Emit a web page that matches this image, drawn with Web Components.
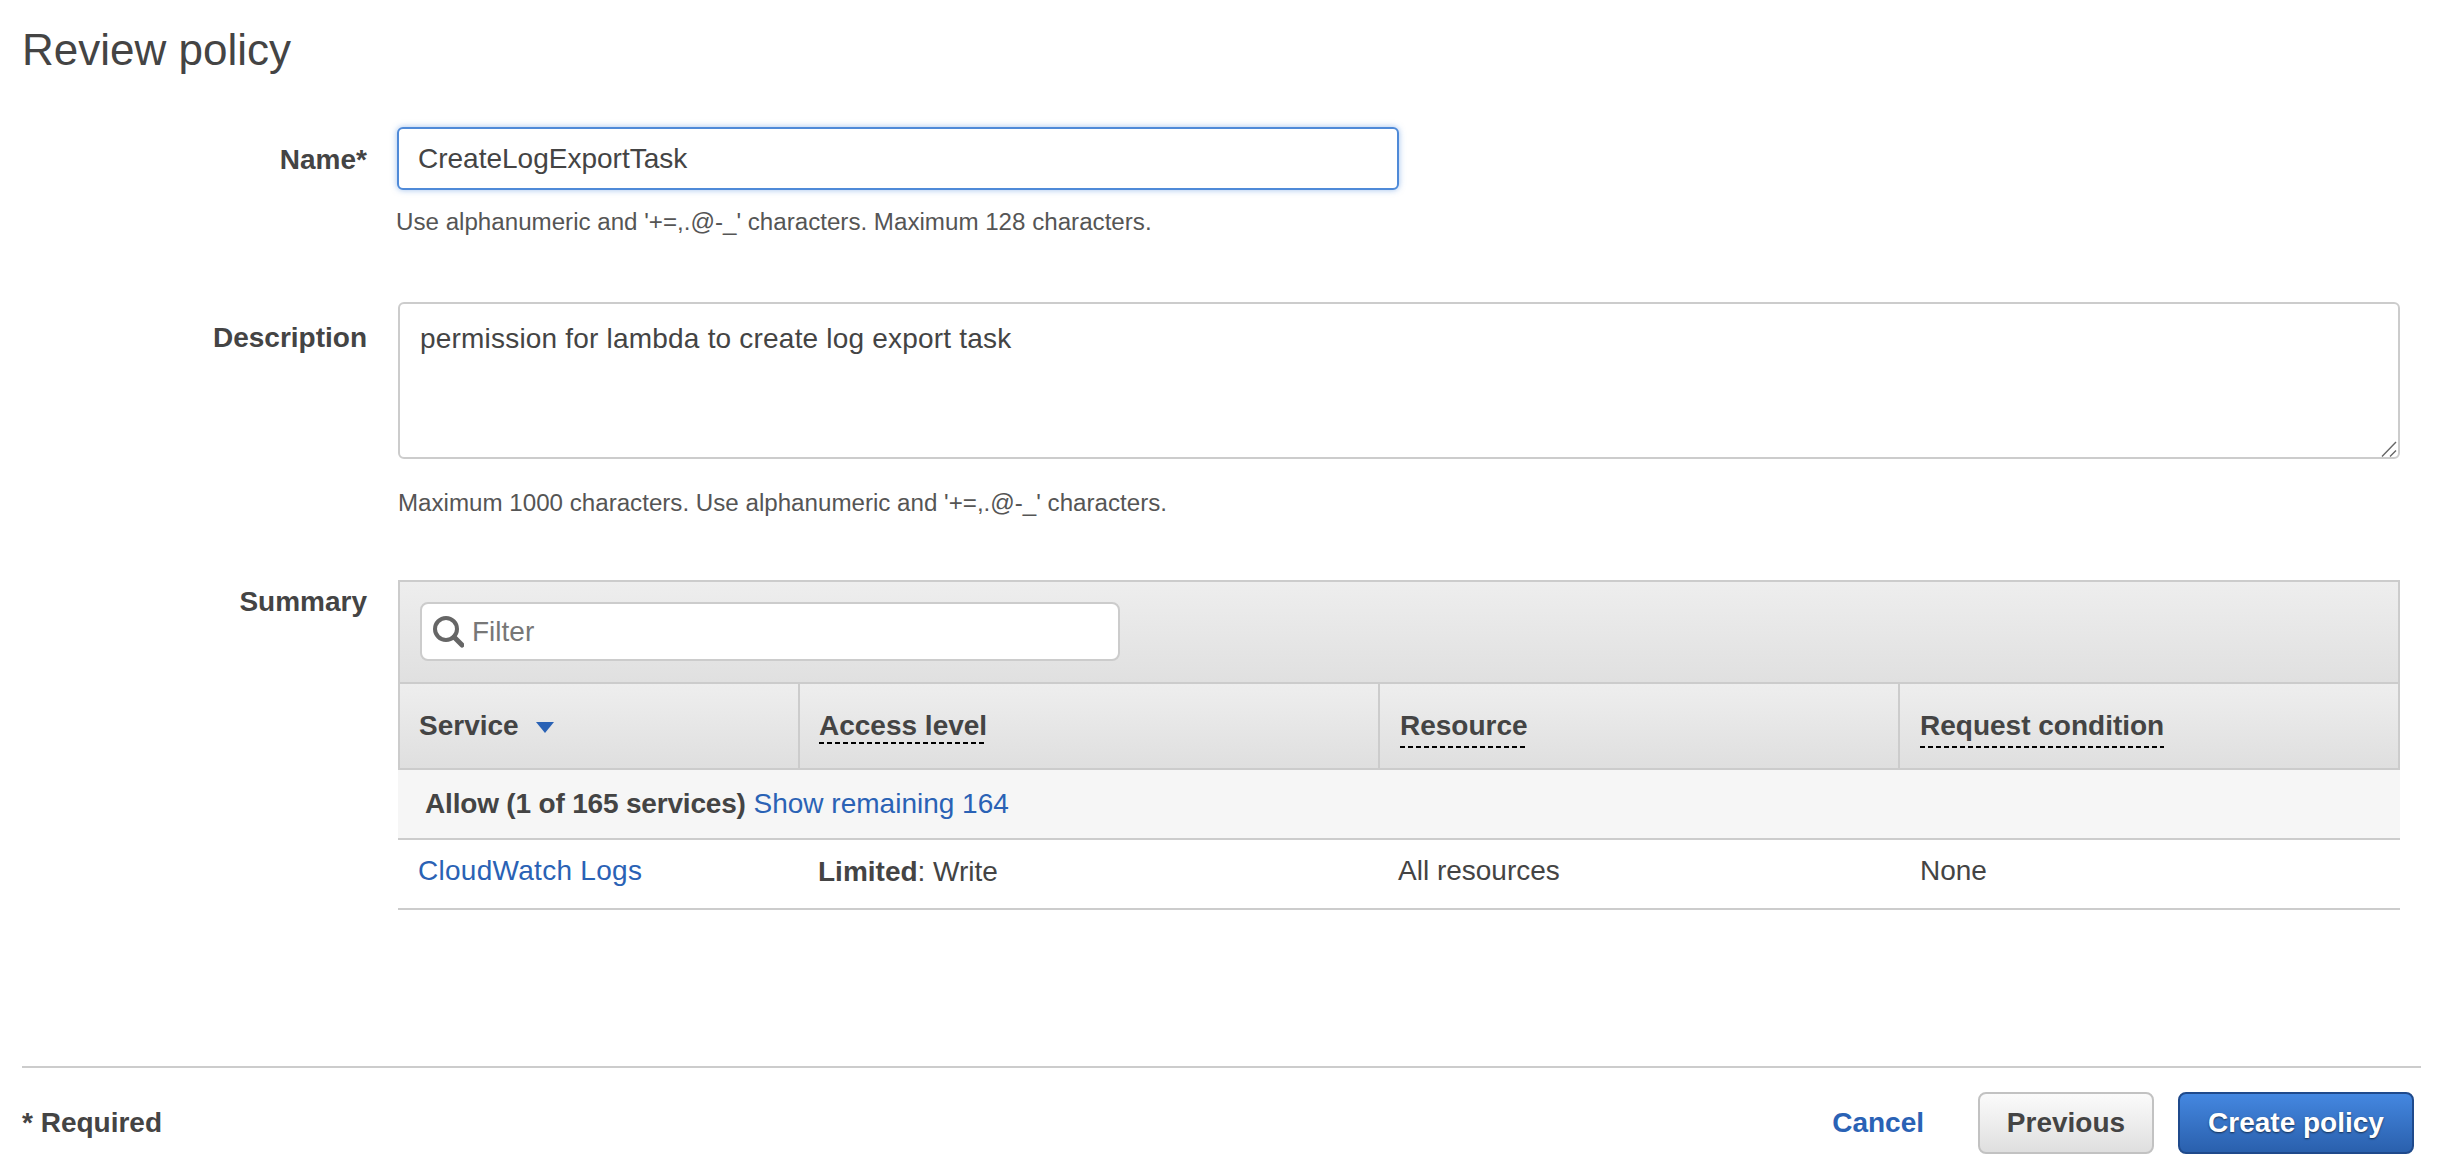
<!DOCTYPE html>
<html><head><meta charset="utf-8"><style>
html,body{margin:0;background:#fff}
body{font:28px/40px "Liberation Sans",Arial,sans-serif;color:#444}
</style></head><body>
<review-page></review-page>
<template id="t-page"><style>
:host{display:block;height:1172px;box-sizing:border-box;padding:0 19px 0 22px;overflow:hidden}
h1{margin:0;padding-top:22px;font-size:44px;line-height:56px;font-weight:400;color:#444}
.rows{margin-top:49px;display:flex;flex-direction:column}
</style>
<h1>Review policy</h1>
<div class="rows">
<form-row label="Name*" lt="13" hg="12" hx="-1" style="margin-bottom:60px" hint="Use alphanumeric and '+=,.@-_' characters. Maximum 128 characters."><text-box focused>CreateLogExportTask</text-box></form-row>
<form-row label="Description" lt="16" shift="1" hint="Maximum 1000 characters. Use alphanumeric and '+=,.@-_' characters." hg="24" style="margin-bottom:57px"><text-box multiline>permission for lambda to create log export task</text-box></form-row>
<form-row label="Summary" lt="2" shift="1"><policy-table></policy-table></form-row>
</div>
<page-footer></page-footer>
</template>
<template id="t-row"><style>
:host{display:grid;grid-template-columns:345px 1fr;column-gap:30px}
.l{font-weight:700;text-align:right;padding-top:var(--lt,11px)}
.f{min-width:0;margin-left:var(--sh,0)}
.h{font-size:24.15px;line-height:40px;color:#555;margin-top:var(--hg,11px);margin-left:var(--hx,0)}
.h:empty{display:none}
</style><div class="l"></div><div class="f"><slot></slot><div class="h"></div></div></template>
<template id="t-box"><style>
:host{display:block;box-sizing:border-box;width:2002px;background:#fff;border:2px solid #ccc;border-radius:6px;padding:15px 24px 11px 20px;height:157px;position:relative;letter-spacing:.2px}
:host([focused]){height:63px;width:1002px;border-color:#4f8ad8;box-shadow:0 0 6px rgba(80,140,220,.55);padding:10px 24px 9px 19px;letter-spacing:0}
svg{position:absolute;right:1px;bottom:0}
</style><slot></slot></template>
<template id="t-table"><style>
:host{display:block;width:2002px}
.bar{height:102px;box-sizing:border-box;border:2px solid #ccc;border-bottom:0;background:linear-gradient(#eeeeee,#e0e0e0);padding:20px 20px 0}
.filter{width:700px;height:59px;box-sizing:border-box;background:#fff;border:2px solid #ccc;border-radius:8px;display:flex;align-items:center;gap:8px;padding:0 10px;color:#777}
.head{height:88px;box-sizing:border-box;border:2px solid #ccc;display:grid;grid-template-columns:398px 580px 520px 1fr;background:linear-gradient(#eeeeee,#dfdfdf);font-weight:700;line-height:36px}
.head>div{padding:24px 0 0 20px;border-left:2px solid #ccc}
.head>div:nth-child(2){padding-left:19px}
.head>div:first-child{border-left:0;padding-left:19px}
.dash{display:inline-block;line-height:36px;padding-bottom:4px;background:repeating-linear-gradient(90deg,#000 0 5px,transparent 5px 8px) left bottom/100% 2px no-repeat}
.head>div:nth-child(2) .dash{padding-bottom:0}
.allow{height:70px;box-sizing:border-box;background:#f6f6f6;border-bottom:2px solid #ccc;padding:14px 0 0 27px}
.allow b{font-weight:700;letter-spacing:-.18px}
a{color:#2a62b5;text-decoration:none}
.row{height:70px;box-sizing:border-box;border-bottom:2px solid #ccc;display:grid;grid-template-columns:400px 580px 520px 1fr;padding-top:11px}
.row>div{padding-left:20px}
.row>div:first-child a{letter-spacing:.28px}
.row>div:nth-child(2){padding-left:20px;position:relative;top:1px}
.row>div:nth-child(4){padding-left:22px}
svg{display:block;flex:none}
.arrow{display:inline-block;margin-left:17px;vertical-align:2px}
</style>
<div class="bar"><div class="filter"><svg width="32" height="32" viewBox="0 0 32 32"><circle cx="14" cy="13" r="11" fill="none" stroke="#666" stroke-width="4"/><path d="M22 21l8 8" stroke="#666" stroke-width="5" stroke-linecap="round"/></svg><span>Filter</span></div></div>
<div class="head"><div><span>Service</span><svg class="arrow" style="display:inline-block" width="18" height="11" viewBox="0 0 18 11"><path d="M0 0h18L9 11z" fill="#2a62b5"/></svg></div><div><span class="dash">Access level</span></div><div><span class="dash">Resource</span></div><div><span class="dash">Request condition</span></div></div>
<div class="allow"><b>Allow (1 of 165 services)</b> <a>Show remaining 164</a></div>
<div class="row"><div><a>CloudWatch Logs</a></div><div><b>Limited</b>: Write</div><div>All resources</div><div>None</div></div>
</template>
<template id="t-footer"><style>
:host{display:flex;align-items:center;justify-content:space-between;position:absolute;left:22px;right:19px;top:1066px;box-sizing:border-box;border-top:2px solid #ccc;padding:24px 7px 0 0}
.req{font-weight:700}
.acts{display:flex;align-items:center}
a{color:#2a62b5;font-weight:700;margin-right:54px}
</style><span class="req">* Required</span><span class="acts"><a>Cancel</a><page-button>Previous</page-button><page-button primary>Create policy</page-button></span></template>
<template id="t-btn"><style>
:host{display:flex;align-items:center;justify-content:center;box-sizing:border-box;height:62px;width:176px;border:2px solid #c2c2c2;border-radius:8px;background:linear-gradient(#fbfbfb,#dfdfdf);font-weight:700;color:#444}
:host([primary]){width:236px;margin-left:24px;background:linear-gradient(#4487e0,#2a60ad);border-color:#1f4a8c;color:#fff;text-shadow:0 1px 2px rgba(0,0,0,.6)}
</style><slot></slot></template>
<script>
function shadow(el,id){const r=el.attachShadow({mode:'open'});r.appendChild(document.getElementById(id).content.cloneNode(true));return r}
customElements.define('page-button',class extends HTMLElement{constructor(){super();shadow(this,'t-btn')}});
customElements.define('page-footer',class extends HTMLElement{constructor(){super();shadow(this,'t-footer')}});
customElements.define('policy-table',class extends HTMLElement{constructor(){super();shadow(this,'t-table')}});
customElements.define('text-box',class extends HTMLElement{constructor(){super();const r=shadow(this,'t-box');
 if(this.hasAttribute('multiline')){r.innerHTML+='<svg width="16" height="16" viewBox="0 0 16 16"><path d="M1 15.5L15 1M9 15.5l6-6" stroke="#666" stroke-width="1.4" fill="none"/></svg>'}}});
customElements.define('form-row',class extends HTMLElement{constructor(){super();shadow(this,'t-row')}
 connectedCallback(){const r=this.shadowRoot;r.querySelector('.l').textContent=this.getAttribute('label');r.querySelector('.h').textContent=this.getAttribute('hint')||'';
 const set=(a,v)=>{if(this.hasAttribute(a))this.style.setProperty(v,this.getAttribute(a)+'px')};set('lt','--lt');set('hg','--hg');set('hx','--hx');set('shift','--sh')}});
customElements.define('review-page',class extends HTMLElement{constructor(){super();shadow(this,'t-page')}});
</script>
</body></html>
